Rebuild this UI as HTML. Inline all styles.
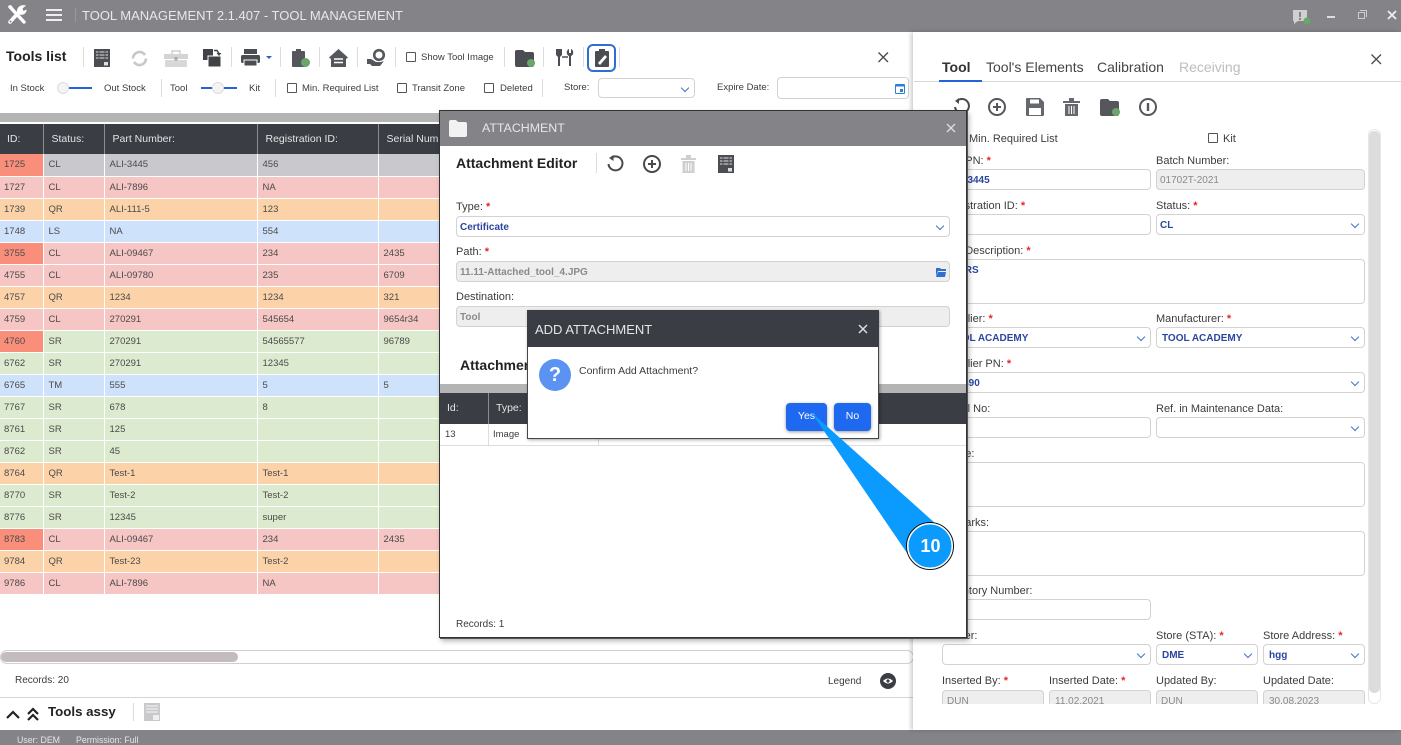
<!DOCTYPE html>
<html><head><meta charset="utf-8"><title>Tool Management</title>
<style>
*{box-sizing:border-box}
html,body{margin:0;padding:0;width:1401px;height:745px;overflow:hidden;background:#fff;font-family:"Liberation Sans",sans-serif;color:#3c3c3c}
#w{position:absolute;left:0;top:0;width:1401px;height:745px;overflow:hidden;filter:blur(.3px)}
.a,.t,.i,.s,.d{position:absolute}
.t{white-space:nowrap;font-size:10px;line-height:12px}
.l{font-size:11px;margin-top:1px}
.r{color:#e8281f;font-weight:bold}
.i,.s,.d{border:1px solid #d2d2d2;border-radius:4px;background:#fff;font-size:10px;line-height:21px;padding-left:3px;color:#2b46a0;font-weight:bold;white-space:nowrap;overflow:hidden}
.d{background:#eeeeee;color:#8a8a8a;font-weight:normal}
.s:after{content:"";position:absolute;right:6px;top:6px;width:5px;height:5px;border-right:1.4px solid #3f74c9;border-bottom:1.4px solid #3f74c9;transform:rotate(45deg)}
.c{position:absolute;width:10px;height:10px;border:1px solid #555;border-radius:1px;background:#fff}
.sep{position:absolute;width:1px;background:#dcdcdc}
table{border-collapse:collapse;table-layout:fixed;position:absolute}
#g td{height:22px;padding:0 0 0 5px;font-size:9.5px;color:#4a4a4a;border-right:1px solid rgba(255,255,255,.55);border-bottom:1px solid rgba(255,255,255,.35);white-space:nowrap;overflow:hidden}
#g th{height:30px;background:#3a3d44;color:#e4e4e4;font-weight:normal;font-size:10.5px;text-align:left;padding:0 0 0 8px;border-right:1px solid #8a8c90;white-space:nowrap;overflow:hidden}
.x td{background:#c9c9cd}.p td{background:#f5c6c3}.o td{background:#fcd3a9}.b td{background:#cfe2fb}.n td{background:#dceacf}
#g tr td.h{background:#f98f7b}
svg{position:absolute;overflow:visible}
</style></head><body><div id="w">

<!-- title bar -->
<div class="a" style="left:0;top:0;width:1401px;height:32px;background:#848387"></div>
<svg style="left:7px;top:4px" width="20" height="21" viewBox="0 0 20 21"><path d="M3 3L17 18" stroke="#fff" stroke-width="3.400" stroke-linecap="round"/><path d="M1 2L4 1L7 5L5 7z" fill="#fff"/><path d="M3 18L12 8" stroke="#fff" stroke-width="3.600" stroke-linecap="round"/><path d="M10 7C10 3 14 0 19 1.500L15.500 4.500L16.500 7L19.500 5.500C20 9 16 12 12 10.500z" fill="#fff"/><circle cx="3.500" cy="17.500" r="1" fill="#848387"/></svg>
<div class="a" style="left:46px;top:9px;width:16px;height:12px;border-top:2px solid #eee;border-bottom:2px solid #eee"><div style="margin-top:3px;height:2px;background:#eee"></div></div>
<div class="sep" style="left:75px;top:8px;height:14px;background:#999"></div>
<div class="t" style="left:82px;top:8px;font-size:13px;line-height:16px;color:#e8e8e8">TOOL MANAGEMENT 2.1.407 - TOOL MANAGEMENT</div>
<svg style="left:1293px;top:9px" width="20" height="17" viewBox="0 0 20 17"><path d="M0 1h14v11H5l-4 3v-3H0z" fill="#d0d0d0"/><rect x="6" y="3" width="2" height="5" fill="#848387"/><rect x="6" y="9" width="2" height="2" fill="#848387"/><circle cx="14" cy="12" r="3.5" fill="#6aa56a"/></svg>
<div class="a" style="left:1327px;top:16px;width:8px;height:2px;background:#ddd"></div>
<div class="a" style="left:1358px;top:12px;width:7px;height:7px;border:1px solid #ccc"></div>
<div class="a" style="left:1360px;top:10px;width:7px;height:7px;border:1px solid #ccc;border-left:0;border-bottom:0"></div>
<svg style="left:1387px;top:10px" width="10" height="10"><path d="M1 1L9 9M9 1L1 9" stroke="#eee" stroke-width="1.8"/></svg>

<!-- left toolbar -->
<div class="t" style="left:6px;top:48px;font-size:14px;line-height:16px;font-weight:bold;color:#222">Tools list</div>
<div class="sep" style="left:83px;top:47px;height:20px"></div>
<svg style="left:94px;top:49px" width="16" height="18"><rect width="16" height="18" fill="#4b4d52"/><path d="M2 3h12M2 6h12M2 9h12" stroke="#c4c4c4" stroke-width="1.3"/><path d="M5 1v10M11 1v10" stroke="#4b4d52"/><rect x="10" y="13" width="4" height="3.500" fill="#ddd"/></svg>
<svg style="left:130px;top:49px" width="19" height="19"><path d="M3 9.500A6.500 6.500 0 0 1 15 6M16 9.500A6.500 6.500 0 0 1 4 13" fill="none" stroke="#c8c8c8" stroke-width="2.600"/></svg>
<svg style="left:164px;top:50px" width="24" height="17"><path d="M8 4V1h8v3" fill="none" stroke="#cfcfcf" stroke-width="1.500"/><rect y="4" width="24" height="5" fill="#d4d4d6"/><rect x="1" y="10" width="22" height="7" fill="#d8d8da"/><rect x="10.500" y="7" width="3" height="3.500" fill="#aaa"/></svg>
<svg style="left:203px;top:48px" width="19" height="19"><rect x="0" y="1" width="10" height="11" fill="#404247"/><rect x="5" y="8" width="13" height="11" fill="#404247" stroke="#fff"/><path d="M11 2.500h3l2 3" stroke="#404247" fill="none" stroke-width="1.500"/><path d="M13.500 5h5l-2.500 3z" fill="#404247"/></svg>
<div class="sep" style="left:231px;top:47px;height:20px"></div>
<svg style="left:241px;top:49px" width="32" height="18"><rect x="3" y="0" width="13" height="5" fill="#4b4d52"/><rect y="6" width="19" height="8" rx="1.500" fill="#4b4d52"/><rect x="3" y="11" width="13" height="6" fill="#4b4d52" stroke="#fff"/><path d="M25 7h6l-3 3z" fill="#2563c9"/></svg>
<div class="sep" style="left:280px;top:47px;height:20px"></div>
<svg style="left:292px;top:49px" width="20" height="19"><rect y="2" width="13" height="16" rx="1" fill="#55575c"/><rect x="4" y="0" width="5" height="4" fill="#55575c"/><circle cx="13.500" cy="13.500" r="4.500" fill="#6aa56a"/></svg>
<div class="sep" style="left:319px;top:47px;height:20px"></div>
<svg style="left:329px;top:49px" width="19" height="18"><path d="M9.500 0L19 8.500L17 10V18H2V10L0 8.500z" fill="#55575c"/><path d="M5 10h9M5 13.500h9" stroke="#fff" stroke-width="1.400"/></svg>
<div class="sep" style="left:357px;top:47px;height:20px"></div>
<svg style="left:366px;top:49px" width="20" height="18"><circle cx="13" cy="6" r="4.800" fill="none" stroke="#55575c" stroke-width="2.600"/><path d="M1 10h4l5 3h5l3-1-4 5H6l-2-2H1z" fill="#55575c"/></svg>
<div class="sep" style="left:395px;top:47px;height:20px"></div>
<div class="c" style="left:406px;top:52px"></div>
<div class="t" style="left:421px;top:52px;font-size:9.5px">Show Tool Image</div>
<div class="sep" style="left:504px;top:47px;height:20px"></div>
<svg style="left:515px;top:49px" width="21" height="18"><path d="M0 3q0-2 2-2h6l2 2h7q2 0 2 2v11q0 2-2 2H2q-2 0-2-2z" fill="#4b4d52"/><circle cx="16" cy="14" r="4" fill="#6aa56a"/></svg>
<div class="sep" style="left:543px;top:47px;height:20px"></div>
<svg style="left:554px;top:48px" width="20" height="19"><path d="M2 1v6l2 2v9h2V9l2-2V1M15 1c-3 1-3 6 0 7v10h2V8c3-1 3-6 0-7v4h-2z" fill="#4b4d52"/><path d="M8 9h6" stroke="#4b4d52" stroke-width="1.500"/></svg>
<div class="sep" style="left:583px;top:47px;height:20px"></div>
<div class="a" style="left:587px;top:44px;width:29px;height:28px;border:2px solid #2f6fd0;border-radius:6px"></div>
<svg style="left:595px;top:49px" width="14" height="18"><rect y="2" width="14" height="16" rx="1" fill="#4b4d52"/><rect x="4" y="0" width="6" height="4" fill="#4b4d52"/><path d="M3 14L10 6l2 2-7 8z" fill="#fff"/></svg>
<div class="sep" style="left:619px;top:47px;height:20px"></div>
<svg style="left:878px;top:52px" width="11" height="11"><path d="M.5.5L10 10M10 .5L.5 10" stroke="#4a4a4a" stroke-width="1.300"/></svg>

<!-- left toolbar row 2 -->
<div class="t" style="left:10px;top:83px;font-size:9.5px">In Stock</div>
<div class="a" style="left:68px;top:87px;width:24px;height:2px;background:#2563d8"></div>
<div class="a" style="left:57px;top:82px;width:12px;height:12px;border-radius:50%;background:#f4f4f4;border:1px solid #ddd"></div>
<div class="t" style="left:104px;top:83px;font-size:9.5px">Out Stock</div>
<div class="sep" style="left:161px;top:79px;height:18px"></div>
<div class="t" style="left:170px;top:83px;font-size:9.5px">Tool</div>
<div class="a" style="left:201px;top:87px;width:36px;height:2px;background:#2563d8"></div>
<div class="a" style="left:212px;top:82px;width:12px;height:12px;border-radius:50%;background:#f4f4f4;border:1px solid #ddd"></div>
<div class="t" style="left:249px;top:83px;font-size:9.5px">Kit</div>
<div class="sep" style="left:275px;top:79px;height:18px"></div>
<div class="c" style="left:287px;top:83px"></div>
<div class="t" style="left:302px;top:83px;font-size:9.5px">Min. Required List</div>
<div class="c" style="left:397px;top:83px"></div>
<div class="t" style="left:412px;top:83px;font-size:9.5px">Transit Zone</div>
<div class="c" style="left:484px;top:83px"></div>
<div class="t" style="left:500px;top:83px;font-size:9.5px">Deleted</div>
<div class="sep" style="left:542px;top:79px;height:18px"></div>
<div class="t" style="left:564px;top:82px;font-size:9.5px">Store:</div>
<div class="s" style="left:598px;top:78px;width:97px;height:20px"></div>
<div class="t" style="left:717px;top:82px;font-size:9.5px">Expire Date:</div>
<div class="i" style="left:777px;top:77px;width:132px;height:22px"></div>
<svg style="left:895px;top:83px" width="10" height="11"><rect y="1" width="10" height="10" rx="1" fill="#2f7fd6"/><rect x="1" y="3.500" width="8" height="6.500" fill="#fff"/><rect x="5" y="6" width="3" height="3" fill="#2f7fd6"/></svg>

<!-- grid -->
<div class="a" style="left:0;top:113px;width:913px;height:9px;background:#b4b4b4"></div>
<table id="g" style="left:-1px;top:124px;width:914px">
<colgroup><col style="width:44px"><col style="width:61px"><col style="width:153px"><col style="width:121px"><col style="width:535px"></colgroup>
<tr><th>ID:</th><th>Status:</th><th>Part Number:</th><th>Registration ID:</th><th>Serial Number:</th></tr>
<tr class="x"><td class="h">1725</td><td>CL</td><td>ALI-3445</td><td>456</td><td></td></tr>
<tr class="p"><td>1727</td><td>CL</td><td>ALI-7896</td><td>NA</td><td></td></tr>
<tr class="o"><td>1739</td><td>QR</td><td>ALI-111-5</td><td>123</td><td></td></tr>
<tr class="b"><td>1748</td><td>LS</td><td>NA</td><td>554</td><td></td></tr>
<tr class="p"><td class="h">3755</td><td>CL</td><td>ALI-09467</td><td>234</td><td>2435</td></tr>
<tr class="p"><td>4755</td><td>CL</td><td>ALI-09780</td><td>235</td><td>6709</td></tr>
<tr class="o"><td>4757</td><td>QR</td><td>1234</td><td>1234</td><td>321</td></tr>
<tr class="p"><td>4759</td><td>CL</td><td>270291</td><td>545654</td><td>9654r34</td></tr>
<tr class="n"><td class="h">4760</td><td>SR</td><td>270291</td><td>54565577</td><td>96789</td></tr>
<tr class="n"><td>6762</td><td>SR</td><td>270291</td><td>12345</td><td></td></tr>
<tr class="b"><td>6765</td><td>TM</td><td>555</td><td>5</td><td>5</td></tr>
<tr class="n"><td>7767</td><td>SR</td><td>678</td><td>8</td><td></td></tr>
<tr class="n"><td>8761</td><td>SR</td><td>125</td><td></td><td></td></tr>
<tr class="n"><td>8762</td><td>SR</td><td>45</td><td></td><td></td></tr>
<tr class="o"><td>8764</td><td>QR</td><td>Test-1</td><td>Test-1</td><td></td></tr>
<tr class="n"><td>8770</td><td>SR</td><td>Test-2</td><td>Test-2</td><td></td></tr>
<tr class="n"><td>8776</td><td>SR</td><td>12345</td><td>super</td><td></td></tr>
<tr class="p"><td class="h">8783</td><td>CL</td><td>ALI-09467</td><td>234</td><td>2435</td></tr>
<tr class="o"><td>9784</td><td>QR</td><td>Test-23</td><td>Test-2</td><td></td></tr>
<tr class="p"><td>9786</td><td>CL</td><td>ALI-7896</td><td>NA</td><td></td></tr>
</table>

<!-- bottom left -->
<div class="a" style="left:0;top:650px;width:914px;height:14px;border:1px solid #d0d0d0;border-radius:7px"></div>
<div class="a" style="left:1px;top:652px;width:237px;height:10px;background:#c4bcbc;border-radius:5px"></div>
<div class="t" style="left:15px;top:675px">Records: 20</div>
<div class="t" style="left:828px;top:676px">Legend</div>
<svg style="left:880px;top:673px" width="16" height="16"><circle cx="8" cy="8" r="8" fill="#3a3d44"/><path d="M3 8q5-5 10 0q-5 5-10 0" fill="#fff"/><circle cx="8" cy="8" r="1.600" fill="#3a3d44"/></svg>
<div class="a" style="left:0;top:697px;width:913px;height:1px;background:#d5d5d5"></div>
<svg style="left:6px;top:707px" width="38" height="15"><path d="M1 11l6-6 6 6M22 7l5-5 5 5M22 13l5-5 5 5" fill="none" stroke="#222" stroke-width="2.200"/></svg>
<div class="t" style="left:48px;top:704px;font-size:13.300px;line-height:16px;font-weight:bold;color:#222">Tools assy</div>
<div class="sep" style="left:133px;top:703px;height:18px"></div>
<svg style="left:144px;top:703px" width="16" height="18"><rect width="16" height="18" fill="#c9c9cd"/><path d="M2 3h12M2 6h12M2 9h12" stroke="#eee" stroke-width="1.200"/><rect x="9" y="12" width="6" height="5" fill="#eee"/></svg>
<div class="a" style="left:0;top:730px;width:1401px;height:15px;background:#848387"></div>
<div class="t" style="left:17px;top:734px;font-size:8.800px;color:#e6e6e6">User: DEM</div>
<div class="t" style="left:76px;top:734px;font-size:8.800px;color:#e6e6e6">Permission: Full</div>

<!-- right panel -->
<div class="a" style="left:913px;top:32px;width:488px;height:698px;background:#fff;box-shadow:-2px 0 4px rgba(0,0,0,.2)"></div>
<div class="a" style="left:914px;top:81px;width:487px;height:1px;background:#d8d8d8"></div>
<div class="a" style="left:939px;top:80px;width:43px;height:2px;background:#2563d8"></div>
<div class="t" style="left:942px;top:59px;font-size:14px;line-height:16px;font-weight:bold;color:#333">Tool</div>
<div class="t" style="left:986px;top:59px;font-size:14px;line-height:16px;color:#444">Tool's Elements</div>
<div class="t" style="left:1097px;top:59px;font-size:14px;line-height:16px;color:#444">Calibration</div>
<div class="t" style="left:1179px;top:59px;font-size:14px;line-height:16px;color:#bdbdbd">Receiving</div>
<svg style="left:1371px;top:54px" width="11" height="11"><path d="M.5.5L10 10M10 .5L.5 10" stroke="#4a4a4a" stroke-width="1.300"/></svg>
<svg style="left:952px;top:98px" width="18" height="18"><path d="M5 3A7 7 0 1 1 3 9" fill="none" stroke="#4a4a4a" stroke-width="2"/><path d="M7 0L3 3l4 3z" fill="#4a4a4a"/></svg>
<svg style="left:988px;top:98px" width="18" height="18"><circle cx="9" cy="9" r="8" fill="none" stroke="#55575c" stroke-width="2"/><path d="M5 9h8M9 5v8" stroke="#55575c" stroke-width="2"/></svg>
<svg style="left:1026px;top:98px" width="18" height="18"><path d="M0 1q0-1 1-1h13l4 4v13q0 1-1 1H1q-1 0-1-1z" fill="#66686d"/><rect x="4" y="1.500" width="9" height="4" fill="#fff"/><rect x="3" y="10" width="12" height="7" fill="#fff"/></svg>
<svg style="left:1063px;top:98px" width="17" height="18"><path d="M0 3h17v2H0zM6 0h5v3H6zM2 6h13v12H2z" fill="#66686d"/><path d="M6 8v8M8.500 8v8M11 8v8" stroke="#fff"/></svg>
<svg style="left:1100px;top:98px" width="21" height="18"><path d="M0 3q0-2 2-2h6l2 2h7q2 0 2 2v11q0 2-2 2H2q-2 0-2-2z" fill="#55575c"/><circle cx="16" cy="14" r="4" fill="#6aa56a"/></svg>
<svg style="left:1139px;top:98px" width="18" height="18"><circle cx="9" cy="9" r="8" fill="none" stroke="#55575c" stroke-width="2"/><path d="M9 5v8" stroke="#55575c" stroke-width="2.400"/></svg>

<div class="c" style="left:952px;top:133px"></div>
<div class="t l" style="left:969px;top:132px">Min. Required List</div>
<div class="c" style="left:1208px;top:133px"></div>
<div class="t l" style="left:1223px;top:132px">Kit</div>

<div class="a" style="left:1368px;top:129px;width:13px;height:575px;border:1px solid #e6e6e6;border-radius:6px"></div>
<div class="a" style="left:1369px;top:131px;width:11px;height:562px;background:#dcdcdf;border-radius:5px"></div>

<div class="t l" style="left:942px;top:154px">Tool PN: <span class="r">*</span></div>
<div class="t l" style="left:1156px;top:154px">Batch Number:</div>
<div class="i" style="left:942px;top:169px;width:209px;height:21px;padding-left:5px">ALI-3445</div>
<div class="d" style="left:1156px;top:169px;width:209px;height:21px">01702T-2021</div>

<div class="t l" style="left:942px;top:199px">Registration ID: <span class="r">*</span></div>
<div class="t l" style="left:1156px;top:199px">Status: <span class="r">*</span></div>
<div class="i" style="left:942px;top:214px;width:209px;height:21px"></div>
<div class="s" style="left:1156px;top:214px;width:209px;height:21px">CL</div>

<div class="t l" style="left:942px;top:244px">Tool Description: <span class="r">*</span></div>
<div class="i" style="left:942px;top:259px;width:423px;height:45px;padding-left:9px">TERS</div>

<div class="t l" style="left:942px;top:312px">Supplier: <span class="r">*</span></div>
<div class="t l" style="left:1156px;top:312px">Manufacturer: <span class="r">*</span></div>
<div class="s" style="left:942px;top:327px;width:209px;height:21px;padding-left:5px">TOOL ACADEMY</div>
<div class="s" style="left:1156px;top:327px;width:209px;height:21px;padding-left:5px">TOOL ACADEMY</div>

<div class="t l" style="left:942px;top:357px">Supplier PN: <span class="r">*</span></div>
<div class="s" style="left:942px;top:372px;width:423px;height:21px;padding-left:9px">12390</div>

<div class="t l" style="left:942px;top:402px">Serial No:</div>
<div class="t l" style="left:1156px;top:402px">Ref. in Maintenance Data:</div>
<div class="i" style="left:942px;top:417px;width:209px;height:21px"></div>
<div class="s" style="left:1156px;top:417px;width:209px;height:21px"></div>

<div class="t l" style="left:942px;top:447px">Name:</div>
<div class="i" style="left:942px;top:462px;width:423px;height:45px"></div>

<div class="t l" style="left:942px;top:516px">Remarks:</div>
<div class="i" style="left:942px;top:531px;width:423px;height:45px"></div>

<div class="t l" style="left:942px;top:584px">Inventory Number:</div>
<div class="i" style="left:942px;top:599px;width:209px;height:21px"></div>

<div class="t l" style="left:942px;top:629px">Owner:</div>
<div class="t l" style="left:1156px;top:629px">Store (STA): <span class="r">*</span></div>
<div class="t l" style="left:1263px;top:629px">Store Address: <span class="r">*</span></div>
<div class="s" style="left:942px;top:644px;width:209px;height:21px"></div>
<div class="s" style="left:1156px;top:644px;width:102px;height:21px;padding-left:5px">DME</div>
<div class="s" style="left:1263px;top:644px;width:102px;height:21px;padding-left:5px">hgg</div>

<div class="t l" style="left:942px;top:674px">Inserted By: <span class="r">*</span></div>
<div class="t l" style="left:1049px;top:674px">Inserted Date: <span class="r">*</span></div>
<div class="t l" style="left:1156px;top:674px">Updated By:</div>
<div class="t l" style="left:1263px;top:674px">Updated Date:</div>
<div class="a" style="left:942px;top:690px;width:423px;height:14px;overflow:hidden">
<div class="d" style="left:0;top:0;width:102px;height:21px;padding-left:4px">DUN</div>
<div class="d" style="left:107px;top:0;width:102px;height:21px;padding-left:5px">11.02.2021</div>
<div class="d" style="left:214px;top:0;width:102px;height:21px;padding-left:4px">DUN</div>
<div class="d" style="left:321px;top:0;width:102px;height:21px;padding-left:5px">30.08.2023</div>
</div>

<!-- attachment modal -->
<div class="a" style="left:439px;top:110px;width:528px;height:528px;background:#fff;border:1px solid #333;box-shadow:1px 1px 0 #555,2px 3px 5px rgba(0,0,0,.3)"></div>
<div class="a" style="left:440px;top:111px;width:526px;height:35px;background:#848387"></div>
<svg style="left:449px;top:120px" width="18" height="17"><path d="M0 2q0-2 2-2h5l2 2h7q2 0 2 2v11q0 2-2 2H2q-2 0-2-2z" fill="#f2f2f2"/></svg>
<div class="t" style="left:482px;top:121px;font-size:12.400px;line-height:15px;color:#e6e6e6">ATTACHMENT</div>
<svg style="left:947px;top:124px" width="8" height="8"><path d="M0 0L8 8M8 0L0 8" stroke="#ddd" stroke-width="1.400"/></svg>
<div class="t" style="left:456px;top:155px;font-size:14px;line-height:16px;font-weight:bold;color:#222">Attachment Editor</div>
<div class="sep" style="left:596px;top:153px;height:20px"></div>
<svg style="left:606px;top:155px" width="18" height="18"><path d="M5 3A7 7 0 1 1 2.500 9" fill="none" stroke="#4a4a4a" stroke-width="2"/><path d="M7.500 0L3 3l4.500 3z" fill="#4a4a4a"/></svg>
<svg style="left:643px;top:155px" width="18" height="18"><circle cx="9" cy="9" r="8" fill="none" stroke="#4a4a4a" stroke-width="2"/><path d="M5 9h8M9 5v8" stroke="#4a4a4a" stroke-width="2"/></svg>
<svg style="left:681px;top:155px" width="15" height="18"><path d="M0 3h15v2H0zM5 0h5v3H5zM1.500 6h12v12h-12z" fill="#cfcfd2"/><path d="M5 8v8M7.500 8v8M10 8v8" stroke="#fff"/></svg>
<svg style="left:718px;top:155px" width="16" height="18"><rect width="16" height="18" fill="#4b4d52"/><path d="M2 3h12M2 6h12M2 9h12" stroke="#c4c4c4" stroke-width="1.300"/><path d="M5 1v10M11 1v10" stroke="#4b4d52"/><rect x="10" y="13" width="4" height="3.500" fill="#ddd"/></svg>

<div class="t l" style="left:456px;top:200px">Type: <span class="r">*</span></div>
<div class="s" style="left:456px;top:216px;width:494px;height:21px">Certificate</div>
<div class="t l" style="left:456px;top:245px">Path: <span class="r">*</span></div>
<div class="d" style="left:456px;top:261px;width:494px;height:21px;font-weight:bold;padding-left:3px">11.11-Attached_tool_4.JPG</div>
<svg style="left:936px;top:267px" width="10" height="10"><path d="M0 1h4l1 1h5v2H2L0 9zM2 5h8l-1 5H0z" fill="#2f6fd0"/></svg>
<div class="t l" style="left:456px;top:290px">Destination:</div>
<div class="d" style="left:456px;top:306px;width:494px;height:21px;font-weight:bold">Tool</div>
<div class="t" style="left:460px;top:357px;font-size:14px;line-height:16px;font-weight:bold;color:#222">Attachments</div>
<div class="a" style="left:440px;top:384px;width:526px;height:9px;background:#b4b4b4"></div>
<div class="a" style="left:440px;top:393px;width:526px;height:31px;background:#3a3d44"></div>
<div class="a" style="left:488px;top:393px;width:1px;height:31px;background:#8a8c90"></div>
<div class="t" style="left:447px;top:402px;font-size:10.500px;color:#e4e4e4">Id:</div>
<div class="t" style="left:496px;top:402px;font-size:10.500px;color:#e4e4e4">Type:</div>
<div class="a" style="left:440px;top:445px;width:526px;height:1px;background:#ddd"></div>
<div class="a" style="left:488px;top:424px;width:1px;height:21px;background:#ddd"></div>
<div class="a" style="left:598px;top:424px;width:1px;height:21px;background:#ddd"></div>
<div class="t" style="left:445px;top:429px;font-size:9.500px">13</div>
<div class="t" style="left:493px;top:429px;font-size:9.500px">Image</div>
<div class="t" style="left:456px;top:617px;margin-top:2px">Records: 1</div>

<!-- confirm -->
<div class="a" style="left:527px;top:310px;width:352px;height:129px;background:#fff;border:1px solid #44464c;box-shadow:1px 1px 3px rgba(0,0,0,.35)"></div>
<div class="a" style="left:527px;top:310px;width:352px;height:37px;background:#3a3d44"></div>
<div class="t" style="left:535px;top:322px;font-size:13px;line-height:15px;color:#e6e6e6">ADD ATTACHMENT</div>
<svg style="left:859px;top:325px" width="8" height="8"><path d="M0 0L8 8M8 0L0 8" stroke="#ddd" stroke-width="1.500"/></svg>
<div class="a" style="left:539px;top:359px;width:32px;height:32px;border-radius:50%;background:#5b93f2;color:#fff;font-weight:bold;font-size:20px;line-height:32px;text-align:center">?</div>
<div class="t" style="left:579px;top:365px;font-size:10.500px">Confirm Add Attachment?</div>
<div class="a" style="left:786px;top:403px;width:41px;height:28px;background:#1f68f0;border-radius:4px;color:#fff;font-size:10.500px;line-height:27px;text-align:center;box-shadow:0 1px 3px rgba(0,0,0,.4)">Yes</div>
<div class="a" style="left:834px;top:403px;width:37px;height:28px;background:#1f68f0;border-radius:4px;color:#fff;font-size:10.500px;line-height:27px;text-align:center;box-shadow:0 1px 3px rgba(0,0,0,.4)">No</div>

<!-- callout -->
<svg style="left:0;top:0" width="1401" height="745"><path d="M811 412L936 524L907 553z" fill="#0b9bff"/><circle cx="930" cy="546" r="22.500" fill="#0b9bff" stroke="#fff" stroke-width="2"/><circle cx="930" cy="546" r="23.500" fill="none" stroke="#111" stroke-width="1"/></svg>
<div class="t" style="left:907px;top:536px;width:47px;text-align:center;font-size:18px;line-height:21px;font-weight:bold;color:#fff">10</div>
</div></body></html>
